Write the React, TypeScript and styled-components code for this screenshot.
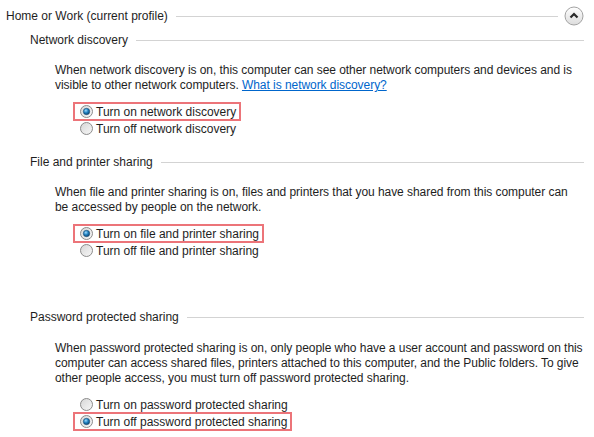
import styled, { createGlobalStyle } from "styled-components";

const GlobalStyle = createGlobalStyle`
  body {
    margin: 0;
    background: #fff;
    font-family: "Liberation Sans", "Noto Sans", sans-serif;
    font-size: 12px;
    color: #1e1e1e;
  }
`;

const Page = styled.div`
  width: 594px;
  height: 437px;
  overflow: hidden;
  display: flex;
  flex-direction: column;
`;

const ProfileRow = styled.div`
  height: 32px;
  display: flex;
  align-items: center;
  padding: 0 10px 0 6px;
  gap: 8px;
  white-space: nowrap;
`;

const SubRow = styled.div<{ $top: number }>`
  height: 16px;
  margin-top: ${(p) => p.$top}px;
  display: flex;
  align-items: center;
  padding: 0 10px 0 30px;
  gap: 8px;
  white-space: nowrap;
`;

const Rule = styled.div`
  flex: 1;
  height: 1px;
  background: #d3d3d3;
`;

const CollapseBtn = styled.button`
  width: 20px;
  height: 20px;
  padding: 0;
  margin-left: -2px;
  border: none;
  background: none;
  display: flex;
`;

const Description = styled.p<{ $top: number }>`
  margin: ${(p) => p.$top}px 0 0 55px;
  line-height: 15px;
  white-space: nowrap;
  letter-spacing: -0.05px;
`;

const Link = styled.a`
  color: #0066cc;
  text-decoration: underline;
`;

const Options = styled.div`
  margin: 10px 0 0 74px;
  display: flex;
  flex-direction: column;
  align-items: flex-start;
`;

const Option = styled.label<{ $marked?: boolean }>`
  height: 17px;
  display: flex;
  align-items: center;
  gap: 3px;
  padding: 0 4px 0 6px;
  outline: ${(p) => (p.$marked ? "2px solid #ec7479" : "none")};
  outline-offset: -1px;
  white-space: nowrap;
`;

function Radio({ checked }: { checked?: boolean }) {
  return (
    <svg width="13" height="13" viewBox="0 0 13 13">
      <defs>
        <linearGradient id="rb" x1="0" y1="0" x2="1" y2="1">
          <stop offset="0" stopColor="#d6d6d6" />
          <stop offset="1" stopColor="#f8f8f8" />
        </linearGradient>
        <radialGradient id="rd" cx="0.4" cy="0.35" r="0.7">
          <stop offset="0" stopColor="#9fdcff" />
          <stop offset="0.5" stopColor="#1f7fbf" />
          <stop offset="1" stopColor="#0b3f6b" />
        </radialGradient>
      </defs>
      <circle cx="6.5" cy="6.5" r="6" fill="url(#rb)" stroke="#8c8c8c" />
      {checked && <circle cx="6.5" cy="6.5" r="3.2" fill="url(#rd)" stroke="#1d4e73" strokeWidth="0.6" />}
    </svg>
  );
}

function CollapseIcon() {
  return (
    <svg width="20" height="20" viewBox="0 0 20 20">
      <defs>
        <linearGradient id="cb" x1="0" y1="0" x2="0" y2="1">
          <stop offset="0" stopColor="#ffffff" />
          <stop offset="1" stopColor="#dcdcdc" />
        </linearGradient>
      </defs>
      <circle cx="10" cy="10" r="9" fill="url(#cb)" stroke="#a3a3a3" />
      <path d="M6.5 11.5 L10 8 L13.5 11.5" fill="none" stroke="#2a2a2a" strokeWidth="2.2" />
    </svg>
  );
}

type Choice = { label: string; checked?: boolean };

function Section({
  title,
  top,
  descTop,
  lines,
  choices,
}: {
  title: string;
  top: number;
  descTop: number;
  lines: React.ReactNode[];
  choices: Choice[];
}) {
  return (
    <>
      <SubRow $top={top}>
        {title}
        <Rule />
      </SubRow>
      <Description $top={descTop}>
        {lines.map((l, i) => (
          <span key={i}>
            {l}
            {i < lines.length - 1 && <br />}
          </span>
        ))}
      </Description>
      <Options>
        {choices.map((c) => (
          <Option key={c.label} $marked={c.checked}>
            <Radio checked={c.checked} />
            {c.label}
          </Option>
        ))}
      </Options>
    </>
  );
}

export default function App() {
  return (
    <Page>
      <GlobalStyle />
      <ProfileRow>
        Home or Work (current profile)
        <Rule />
        <CollapseBtn>
          <CollapseIcon />
        </CollapseBtn>
      </ProfileRow>
      <Section
        title="Network discovery"
        top={0}
        descTop={15}
        lines={[
          "When network discovery is on, this computer can see other network computers and devices and is",
          <>
            visible to other network computers. <Link href="#">What is network discovery?</Link>
          </>,
        ]}
        choices={[
          { label: "Turn on network discovery", checked: true },
          { label: "Turn off network discovery" },
        ]}
      />
      <Section
        title="File and printer sharing"
        top={17}
        descTop={15}
        lines={[
          "When file and printer sharing is on, files and printers that you have shared from this computer can",
          "be accessed by people on the network.",
        ]}
        choices={[
          { label: "Turn on file and printer sharing", checked: true },
          { label: "Turn off file and printer sharing" },
        ]}
      />
      <Section
        title="Password protected sharing"
        top={50}
        descTop={16}
        lines={[
          "When password protected sharing is on, only people who have a user account and password on this",
          "computer can access shared files, printers attached to this computer, and the Public folders. To give",
          "other people access, you must turn off password protected sharing.",
        ]}
        choices={[
          { label: "Turn on password protected sharing" },
          { label: "Turn off password protected sharing", checked: true },
        ]}
      />
    </Page>
  );
}
